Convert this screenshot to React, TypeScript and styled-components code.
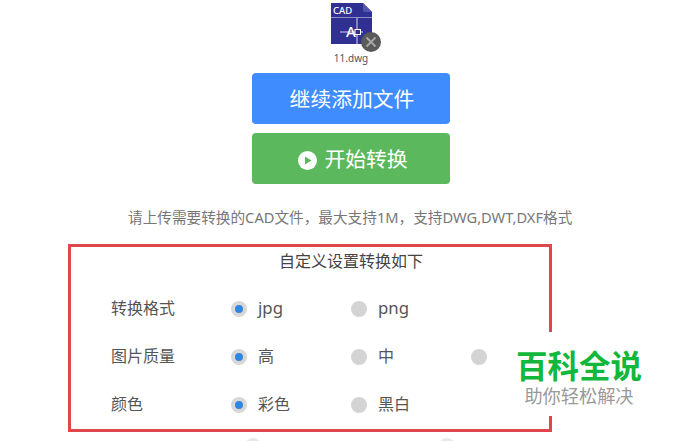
import React from "react";
import styled, { createGlobalStyle } from "styled-components";

const Global = createGlobalStyle`
  html, body { margin: 0; padding: 0; background: #fff; }
  body { font-family: "Noto Sans", "Noto Sans CJK SC", sans-serif; overflow: hidden; }
`;

const Page = styled.div`
  position: relative;
  width: 692px;
  height: 441px;
  overflow: hidden;
  background: #fff;
`;

const Column = styled.div`
  width: 198px;
  margin-left: 252px;
  display: flex;
  flex-direction: column;
  align-items: center;
  padding-top: 3px;
`;

const FileIcon = styled.div`
  position: relative;
  width: 42px;
  height: 42px;
`;

const FileName = styled.div`
  font-size: 10px;
  line-height: 14px;
  color: #555;
  margin-top: 6px;
  height: 14px;
`;

const Button = styled.div<{ $bg: string; $top: number; $shift: number }>`
  box-sizing: border-box;
  width: 198px;
  height: 51px;
  margin-top: ${(p) => p.$top}px;
  padding: 0 0 2px ${(p) => p.$shift}px;
  background: ${(p) => p.$bg};
  border-radius: 4px;
  color: #fff;
  font-size: 20.8px;
  display: flex;
  align-items: center;
  justify-content: center;
  gap: 7px;
`;

const PlaySlot = styled.span`
  display: flex;
  margin-top: 6px;
`;

const Hint = styled.div`
  margin: 22px 0 0 128px;
  width: 470px;
  font-size: 14.65px;
  line-height: 22px;
  color: #777;
  white-space: nowrap;
`;

const Box = styled.div`
  box-sizing: border-box;
  width: 484px;
  height: 188px;
  margin: 16px 0 0 68px;
  border: 3px solid #e0474c;
  padding: 2px 0 0 40px;
`;

const Title = styled.div`
  font-size: 16px;
  line-height: 24px;
  color: #444;
  margin-left: 168px;
`;

const Rows = styled.div`
  display: flex;
  flex-direction: column;
  margin-top: 10px;
`;

const Row = styled.div`
  display: grid;
  grid-template-columns: 120px 120px 120px 120px;
  height: 48px;
  align-items: center;
`;

const Label = styled.div`
  font-size: 16px;
  color: #555;
`;

const Option = styled.div`
  display: flex;
  align-items: center;
  gap: 11px;
  font-size: 16px;
  color: #555;
`;

const Latin = styled.span`
  font-size: 16.8px;
`;

const Radio = styled.span<{ $on?: boolean }>`
  box-sizing: border-box;
  width: 16px;
  height: 16px;
  margin-top: 3px;
  border-radius: 50%;
  background: ${(p) => (p.$on ? "#2f86e0" : "#d4d4d4")};
  border: ${(p) => (p.$on ? "4px solid #d9d8d6" : "none")};
  flex: none;
`;

const Watermark = styled.div`
  position: absolute;
  left: 505px;
  top: 332px;
  width: 148px;
  height: 84px;
  background: #fff;
  display: flex;
  flex-direction: column;
  align-items: center;
`;

const BrandName = styled.div`
  font-size: 31.5px;
  line-height: 36px;
  margin-top: 16px;
  font-weight: 700;
  color: #12b83c;
  white-space: nowrap;
`;

const BrandSub = styled.div`
  font-size: 18.2px;
  line-height: 22px;
  margin-top: 1px;
  color: #999;
  white-space: nowrap;
`;

const Stub = styled.span<{ $x: number }>`
  position: absolute;
  top: 438px;
  left: ${(p) => p.$x}px;
  width: 16px;
  height: 16px;
  border-radius: 50%;
  background: #e8e8e8;
`;

const DwgIcon = () => (
  <svg width="54" height="52" viewBox="0 0 54 52" style={{ display: "block" }}>
    <path d="M1 0H33L42 9V41H1Z" fill="#2f3091" />
    <path d="M33 0L42 9H35Q33 9 33 7Z" fill="#5556ad" />
    <path d="M1 14.5H42" stroke="#8f90cc" strokeWidth="1" />
    <text x="3" y="11" fontSize="9.5" fontWeight="500" fill="#fff" fontFamily="Noto Sans, sans-serif">CAD</text>
    <path d="M10 29H33M27 15V41" stroke="#d8d8ee" strokeWidth="1" fill="none" />
    <text x="16" y="34" fontSize="15" fontWeight="500" fill="#fff" fontFamily="Noto Sans, sans-serif">A</text>
    <rect x="25" y="26.5" width="5.5" height="5" fill="#2f3091" stroke="#fff" strokeWidth="1" />
    <circle cx="41" cy="39" r="10" fill="#5a5a5a" />
    <path d="M36.5 34.5L45.5 43.5M45.5 34.5L36.5 43.5" stroke="#a8a8a8" strokeWidth="1.8" />
  </svg>
);

const PlayIcon = () => (
  <svg width="19" height="19" viewBox="0 0 19 19" style={{ display: "block" }}>
    <circle cx="9.5" cy="9.5" r="9.5" fill="#fff" />
    <path d="M7 5.5L13.5 9.5L7 13.5Z" fill="#5cb85c" />
  </svg>
);

export default function App() {
  return (
    <Page>
      <Global />
      <Column>
        <FileIcon>
          <DwgIcon />
        </FileIcon>
        <FileName>11.dwg</FileName>
        <Button $bg="#3f8cff" $top={8} $shift={2}>继续添加文件</Button>
        <Button $bg="#5cb85c" $top={9} $shift={4}>
          <PlaySlot><PlayIcon /></PlaySlot>
          开始转换
        </Button>
      </Column>
      <Hint>请上传需要转换的CAD文件，最大支持1M，支持DWG,DWT,DXF格式</Hint>
      <Box>
        <Title>自定义设置转换如下</Title>
        <Rows>
          <Row>
            <Label>转换格式</Label>
            <Option><Radio $on /><Latin>jpg</Latin></Option>
            <Option><Radio /><Latin>png</Latin></Option>
          </Row>
          <Row>
            <Label>图片质量</Label>
            <Option><Radio $on />高</Option>
            <Option><Radio />中</Option>
            <Option><Radio /></Option>
          </Row>
          <Row>
            <Label>颜色</Label>
            <Option><Radio $on />彩色</Option>
            <Option><Radio />黑白</Option>
          </Row>
        </Rows>
      </Box>
      <Stub $x={245} />
      <Stub $x={439} />
      <Watermark>
        <BrandName>百科全说</BrandName>
        <BrandSub>助你轻松解决</BrandSub>
      </Watermark>
    </Page>
  );
}
